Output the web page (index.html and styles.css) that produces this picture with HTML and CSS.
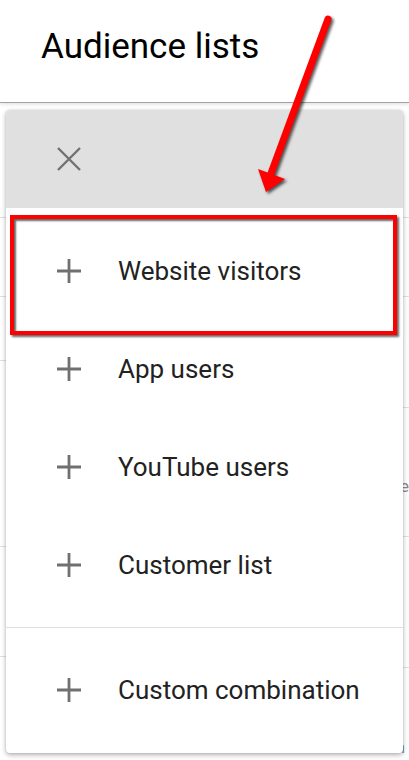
FILE: index.html
```html
<!DOCTYPE html>
<html lang="en">
<head>
    <meta charset="UTF-8">
    <meta name="viewport" content="width=device-width, initial-scale=1.0">
    <title>Audience lists</title>
    <link rel="stylesheet" href="styles.css">
</head>
<body>
    <div class="header">
        <h1>Audience lists</h1>
    </div>

    <!-- table behind the menu -->
    <div class="table">
        <div class="col col-left">
            <div class="row"></div>
            <div class="row"></div>
            <div class="row"></div>
            <div class="row"></div>
            <div class="row"></div>
        </div>
        <div class="col col-right">
            <div class="row"></div>
            <div class="row"></div>
            <div class="row"></div>
            <div class="row"><span class="cell-text">te</span></div>
            <div class="row"></div>
            <div class="row"><span class="cell-text link">n</span></div>
        </div>
    </div>

    <div class="menu">
        <div class="menu-head">
            <svg class="icon" width="24" height="24" viewBox="0 0 24 24">
                <path d="M1 1 L23 23 M23 1 L1 23" stroke="#727272" stroke-width="2.4" fill="none"/>
            </svg>
        </div>
        <div class="menu-section">
            <div class="menu-item">
                <svg class="icon" width="24" height="24" viewBox="0 0 24 24"><path d="M12 0 V24 M0 12 H24" stroke="#707070" stroke-width="2.8" fill="none"/></svg>
                <span>Website visitors</span>
            </div>
            <div class="menu-item">
                <svg class="icon" width="24" height="24" viewBox="0 0 24 24"><path d="M12 0 V24 M0 12 H24" stroke="#707070" stroke-width="2.8" fill="none"/></svg>
                <span>App users</span>
            </div>
            <div class="menu-item">
                <svg class="icon" width="24" height="24" viewBox="0 0 24 24"><path d="M12 0 V24 M0 12 H24" stroke="#707070" stroke-width="2.8" fill="none"/></svg>
                <span>YouTube users</span>
            </div>
            <div class="menu-item">
                <svg class="icon" width="24" height="24" viewBox="0 0 24 24"><path d="M12 0 V24 M0 12 H24" stroke="#707070" stroke-width="2.8" fill="none"/></svg>
                <span>Customer list</span>
            </div>
        </div>
        <div class="menu-section last">
            <div class="menu-item">
                <svg class="icon" width="24" height="24" viewBox="0 0 24 24"><path d="M12 0 V24 M0 12 H24" stroke="#707070" stroke-width="2.8" fill="none"/></svg>
                <span>Custom combination</span>
            </div>
        </div>
    </div>

    <!-- annotation -->
    <div class="highlight"></div>
    <svg class="arrow" width="409" height="220" viewBox="0 0 409 220">
        <g class="arrow-shape">
            <path d="M328 19 L270 176" stroke="#ff0000" stroke-width="7" stroke-linecap="round" fill="none"/>
            <polygon points="266,192 258,169 285,179" fill="#ff0000"/>
        </g>
    </svg>
</body>
</html>
```

FILE: styles.css
```css
body {
    font-family: Roboto, "Noto Sans", Arial, sans-serif;
    background-color: #ffffff;
    color: #212121;
    margin: 0;
    padding: 0;
    width: 409px;
    height: 760px;
    overflow: hidden;
    position: relative;
}
.header {
    height: 103px;
    box-sizing: border-box;
    padding: 25px 0 0 41px;
    border-bottom: 1px solid #a4a4a4;
    box-shadow: 0 1px 4px rgba(0, 0, 0, 0.15);
}
.header h1 {
    margin: 0;
    font-size: 35px;
    line-height: 43px;
    font-weight: 400;
    color: #000;
}
.table {
    display: grid;
    grid-template-columns: 1fr 1fr;
}
.row {
    border-bottom: 1px solid #e0e0e0;
    box-sizing: content-box;
    white-space: nowrap;
    overflow: hidden;
}
.col-left .row:nth-child(1) { height: 114px; }
.col-left .row:nth-child(2) { height: 78px; }
.col-left .row:nth-child(3) { height: 63px; }
.col-left .row:nth-child(4) { height: 185px; }
.col-left .row:nth-child(5) { height: 109px; }
.col-right .row:nth-child(1) { height: 114px; }
.col-right .row:nth-child(2) { height: 78px; }
.col-right .row:nth-child(3) { height: 110px; }
.col-right .row:nth-child(4) { height: 128px; }
.col-right .row:nth-child(5) { height: 130px; }
.col-right .row:nth-child(6) { height: 90px; border-bottom: none; }
.cell-text {
    display: block;
    font-size: 17px;
    line-height: 20px;
    color: #8a8a8a;
    padding: 68px 0 0 197px;
}
.cell-text.link {
    color: #6f86a8;
    padding: 69px 0 0 198px;
}
.menu {
    position: absolute;
    left: 6px;
    top: 110px;
    width: 397px;
    height: 643px;
    background-color: #fff;
    border-radius: 4px;
    box-shadow: 0 2px 5px rgba(0, 0, 0, 0.3), 0 0 2px rgba(0, 0, 0, 0.12);
    overflow: hidden;
}
.menu-head {
    height: 98px;
    box-sizing: border-box;
    padding: 37px 0 0 51px;
    background-color: #e0e0e0;
}
.icon {
    display: block;
    flex-shrink: 0;
}
.menu-section {
    padding: 14px 0 13px;
    border-bottom: 1px solid #e0e0e0;
}
.menu-section.last {
    padding: 13px 0 14px;
    border-bottom: none;
}
.menu-item {
    height: 98px;
    display: flex;
    align-items: center;
    gap: 37px;
    padding-left: 51px;
    font-size: 26px;
    color: #222;
}
.highlight {
    position: absolute;
    left: 10px;
    top: 215px;
    width: 387px;
    height: 120px;
    box-sizing: border-box;
    border: 4px solid #ff0000;
    box-shadow: 2px 2px 2px rgba(0, 0, 0, 0.6), inset 2px 2px 2px rgba(0, 0, 0, 0.6);
}
.arrow {
    position: absolute;
    left: 0;
    top: 0;
}
.arrow-shape {
    filter: drop-shadow(2px 2px 1.5px rgba(0, 0, 0, 0.65));
}
```
